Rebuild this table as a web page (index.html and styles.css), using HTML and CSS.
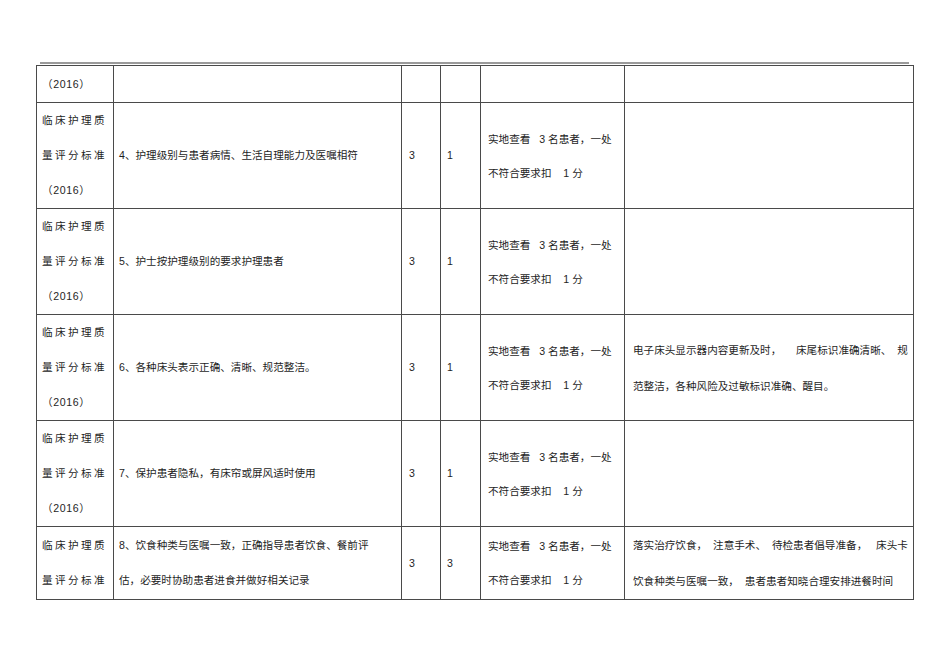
FILE: index.html
```html
<!DOCTYPE html>
<html lang="zh">
<head>
<meta charset="utf-8">
<link rel="stylesheet" href="styles.css">
</head>
<body>
<div class="page">
  <div class="topline"></div>
  <table class="grid">
    <colgroup>
      <col class="w1"><col class="w2"><col class="w3"><col class="w4"><col class="w5"><col class="w6">
    </colgroup>
    <tr class="r-first">
      <td class="c1"><span class="yr">（2016）</span></td>
      <td class="c2"></td>
      <td class="c3"></td>
      <td class="c4"></td>
      <td class="c5"></td>
      <td class="c6"></td>
    </tr>
    <tr class="r-full">
      <td class="c1"><div class="std">临床护理质</div><div class="std">量评分标准</div><div class="yr">（2016）</div></td>
      <td class="c2">4、护理级别与患者病情、生活自理能力及医嘱相符</td>
      <td class="c3">3</td>
      <td class="c4">1</td>
      <td class="c5">实地查看&nbsp;&nbsp; 3 名患者，一处<br>不符合要求扣&nbsp;&nbsp;&nbsp; 1 分</td>
      <td class="c6"></td>
    </tr>
    <tr class="r-full">
      <td class="c1"><div class="std">临床护理质</div><div class="std">量评分标准</div><div class="yr">（2016）</div></td>
      <td class="c2">5、护士按护理级别的要求护理患者</td>
      <td class="c3">3</td>
      <td class="c4">1</td>
      <td class="c5">实地查看&nbsp;&nbsp; 3 名患者，一处<br>不符合要求扣&nbsp;&nbsp;&nbsp; 1 分</td>
      <td class="c6"></td>
    </tr>
    <tr class="r-full">
      <td class="c1"><div class="std">临床护理质</div><div class="std">量评分标准</div><div class="yr">（2016）</div></td>
      <td class="c2">6、各种床头表示正确、清晰、规范整洁。</td>
      <td class="c3">3</td>
      <td class="c4">1</td>
      <td class="c5">实地查看&nbsp;&nbsp; 3 名患者，一处<br>不符合要求扣&nbsp;&nbsp;&nbsp; 1 分</td>
      <td class="c6">电子床头显示器内容更新及时，&nbsp;&nbsp;&nbsp;&nbsp; 床尾标识准确清晰、&nbsp; 规<br>范整洁，各种风险及过敏标识准确、醒目。</td>
    </tr>
    <tr class="r-short">
      <td class="c1"><div class="std">临床护理质</div><div class="std">量评分标准</div><div class="yr">（2016）</div></td>
      <td class="c2">7、保护患者隐私，有床帘或屏风适时使用</td>
      <td class="c3">3</td>
      <td class="c4">1</td>
      <td class="c5">实地查看&nbsp;&nbsp; 3 名患者，一处<br>不符合要求扣&nbsp;&nbsp;&nbsp; 1 分</td>
      <td class="c6"></td>
    </tr>
    <tr class="r-last">
      <td class="c1"><div class="std">临床护理质</div><div class="std">量评分标准</div></td>
      <td class="c2">8、饮食种类与医嘱一致，正确指导患者饮食、餐前评<br>估，必要时协助患者进食并做好相关记录</td>
      <td class="c3">3</td>
      <td class="c4">3</td>
      <td class="c5">实地查看&nbsp;&nbsp; 3 名患者，一处<br>不符合要求扣&nbsp;&nbsp;&nbsp; 1 分</td>
      <td class="c6">落实治疗饮食，&nbsp; 注意手术、&nbsp; 待检患者倡导准备，&nbsp;&nbsp; 床头卡<br>饮食种类与医嘱一致，&nbsp; 患者患者知晓合理安排进餐时间</td>
    </tr>
  </table>
</div>
</body>
</html>
```

FILE: styles.css
```css
html, body {
  margin: 0;
  padding: 0;
  background: #ffffff;
}

.page {
  padding: 62px 0 0 36px;
  font-family: "Liberation Sans", "Noto Sans CJK SC", sans-serif;
  font-size: 10.6px;
  color: #1e1e1e;
}

.topline {
  margin-left: 4px;
  width: 869px;
  height: 2px;
  background: #9a9a9a;
}

.grid {
  border-collapse: collapse;
  table-layout: fixed;
  width: 878px;
  margin-top: 1px;
}

.w1 { width: 77px; }
.w2 { width: 288px; }
.w3 { width: 39px; }
.w4 { width: 40px; }
.w5 { width: 144px; }
.w6 { width: 289px; }

.grid td {
  border: 1px solid #4a4a4a;
  padding: 0;
  vertical-align: middle;
  white-space: nowrap;
  overflow: hidden;
  line-height: 35px;
}

.r-first td { height: 36px; }
.r-full td { height: 105px; }
.r-short td { height: 104px; }
.r-last td { height: 70px; }

.c1 { padding-left: 5px !important; }
.c2 { padding-left: 5px !important; }
.c3 { padding-left: 7px !important; }
.c4 { padding-left: 6px !important; }
.c5 { padding-left: 7px !important; line-height: 34px !important; }
.c6 { padding-left: 8px !important; line-height: 36px !important; }

.std {
  letter-spacing: 2.4px;
}

.yr {
  letter-spacing: 0.6px;
}
```
